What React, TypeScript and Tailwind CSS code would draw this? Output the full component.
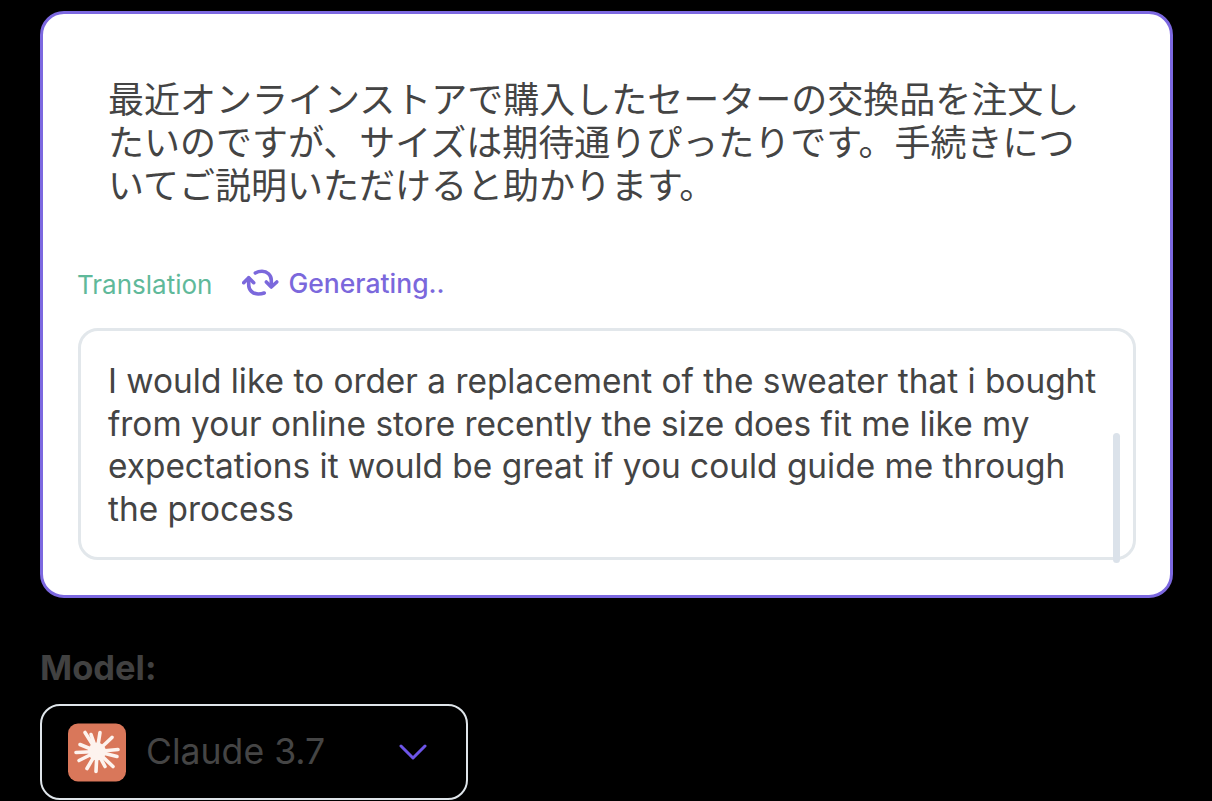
const sans = "font-['Inter','Noto_Sans_CJK_JP',sans-serif]";

// ray tips of the starburst, the rays are not evenly spaced in the logo
const rayTips = [
  [17, 9], [23, 11], [32, 9], [44, 14], [50, 26], [49, 33], [45, 43],
  [37, 43], [28, 48], [19, 45], [11, 37], [8, 29], [12, 21],
];

function ClaudeMark() {
  return (
    <svg viewBox="0 0 58 58" className="w-[58px] h-[59px] shrink-0">
      <rect width="58" height="58" rx="10" fill="#d9775a" />
      <circle cx="29" cy="28" r="9" fill="#fdf3ee" />
      {rayTips.map(([x, y]) => (
        <line
          key={`${x}-${y}`}
          x1="29"
          y1="28"
          x2={x}
          y2={y}
          stroke="#fdf3ee"
          strokeWidth="3.6"
          strokeLinecap="round"
        />
      ))}
    </svg>
  );
}

function Spinner() {
  return (
    <svg viewBox="-2 -1 38 30" className="w-[38px] h-[30px]" fill="none" stroke="#7b68dc" strokeWidth="3.6" strokeLinecap="round" strokeLinejoin="round">
      <path d="M11.300 3C14 1.500 16 1.300 18 1.300c5 0 9.300 3.500 9.300 9V16" />
      <path d="M22.300 12l5 5 5.500-5" />
      <path d="M4.700 8v7c0 5 4 9 9.500 9 2.500 0 4.500-.4 6-1" />
      <path d="M-.3 12.700l5-5 5 5" />
    </svg>
  );
}

export default function App() {
  return (
    <div className={`w-[1212px] h-[801px] overflow-hidden bg-black pt-[11px] px-[40px] ${sans}`}>
      <div className="w-[1133px] h-[587px] rounded-[24px] border-[3px] border-[#7c68e0] bg-white pl-[35px] pr-[34px] pt-[65px]">
        <p className="pl-[30px] w-[1030px] text-[36px] leading-[43px] text-[#444444]">
          最近オンラインストアで購入したセーターの交換品を注文したいのですが、サイズは期待通りぴったりです。手続きについてご説明いただけると助かります。
        </p>
        <div className="flex items-center mt-[56px] h-[40px]">
          <span className="text-[26px] text-[#5fb99a] -ml-px">Translation</span>
          <span className="ml-[30px] mr-[8px]"><Spinner /></span>
          <span className="text-[26.500px] font-medium text-[#7b68dc]">Generating..</span>
        </div>
        <div className="relative mt-[24px] h-[232px] rounded-[20px] border-[3px] border-[#e2e7eb] pl-[27px] pr-[28px] pt-[29px]">
          <p className="text-[33.400px] leading-[42.7px] text-[#444444]">
            I would like to order a replacement of the sweater that i bought from your online store recently the size does fit me like my expectations it would be great if you could guide me through the process
          </p>
          <div className="absolute right-[13px] top-[102px] bottom-[-6px] w-[7px] rounded-full bg-[#dbe2ea]" />
        </div>
      </div>
      <div className="mt-[50px] text-[34.500px] leading-[40px] font-bold text-[#414141]">Model:</div>
      <div className="mt-[16px] flex items-center w-[428px] h-[96px] rounded-[20px] border-[2px] border-[#dfe5ea] pl-[26px]">
        <ClaudeMark />
        <span className="ml-[20px] text-[35.600px] text-[#454545]">Claude 3.7</span>
        <svg viewBox="0 0 28 18" className="ml-[74px] w-[28px] h-[18px]" fill="none" stroke="#6d55e8" strokeWidth="3" strokeLinecap="round" strokeLinejoin="round">
          <path d="M2 3l12 12L26 3" />
        </svg>
      </div>
    </div>
  );
}
